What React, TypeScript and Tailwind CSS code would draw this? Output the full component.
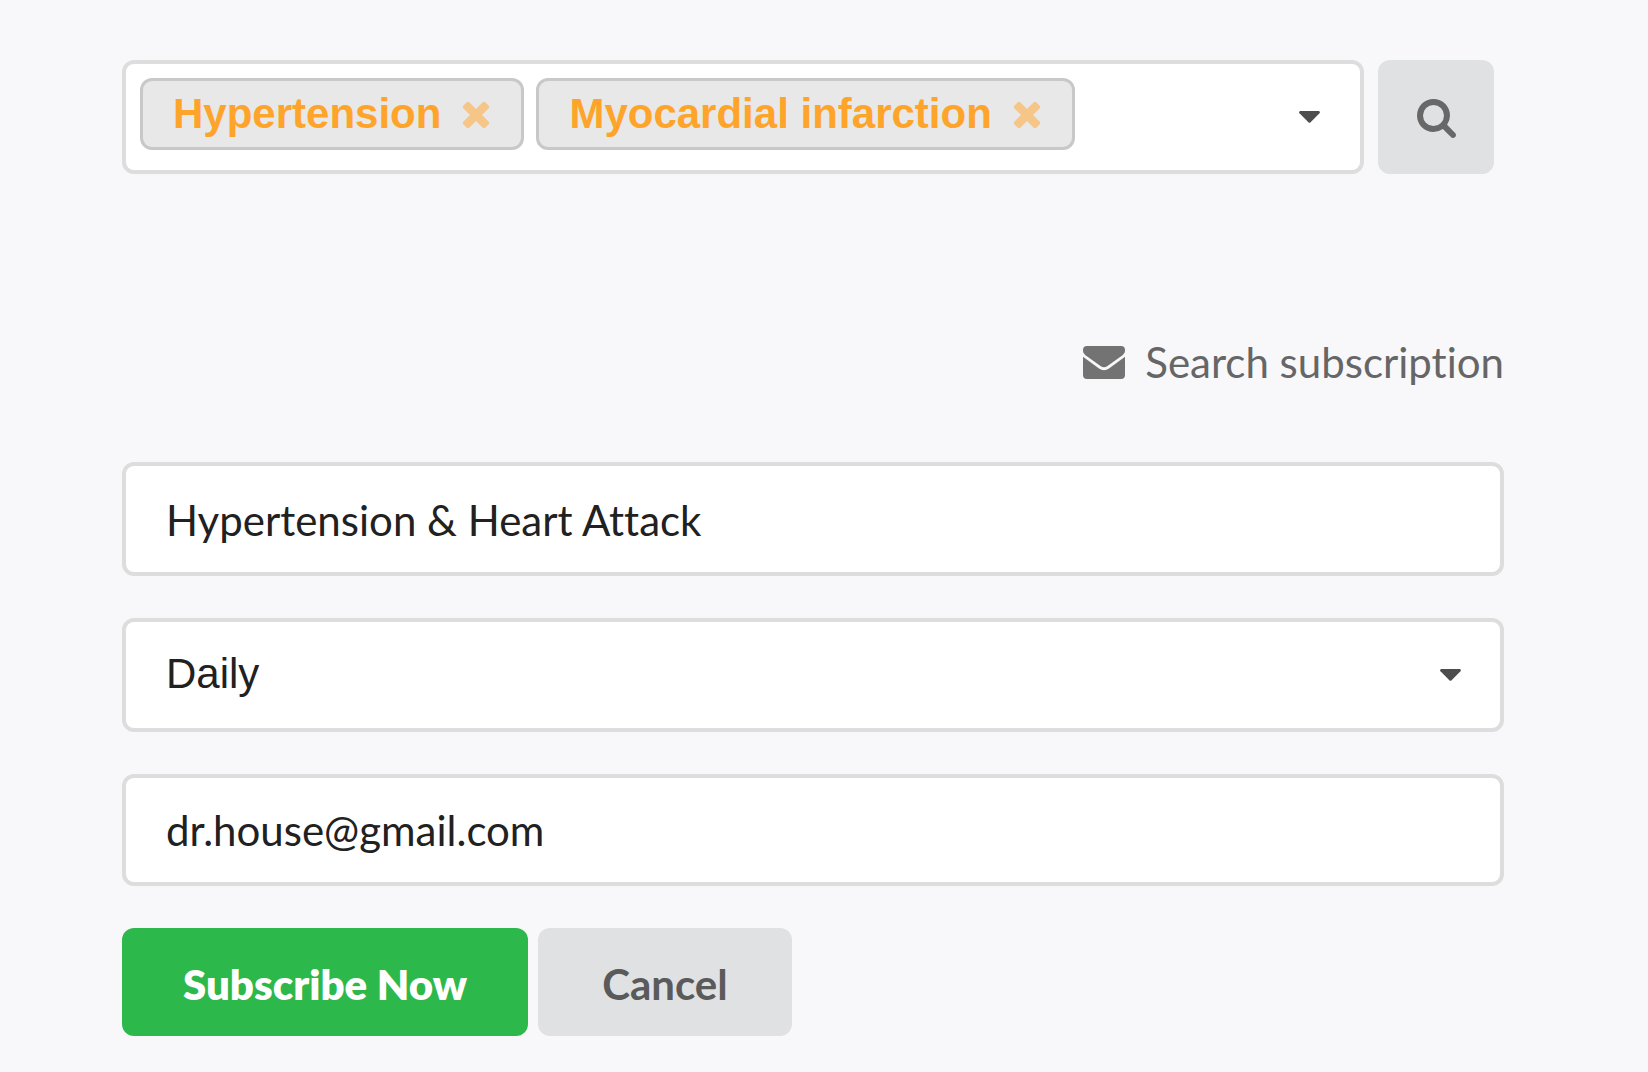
import { useState } from "react";

const fieldBox =
  "w-full rounded-xl border-4 border-[#dddddd] bg-white px-10 text-[42px] text-[#212121] outline-none";

function SearchIcon() {
  return (
    <svg aria-hidden="true" viewBox="64 128 1664 1664" className="size-[39px] fill-current">
      <path d="M1216 832q0-185-131.5-316.5t-316.5-131.5-316.5 131.5-131.5 316.5 131.5 316.5 316.5 131.5 316.5-131.5 131.5-316.5zm512 832q0 52-38 90t-90 38q-54 0-90-38l-343-342q-179 124-399 124-143 0-273.5-55.5t-225-150-150-225-55.5-273.5 55.5-273.5 150-225 225-150 273.5-55.5 273.5 55.5 225 150 150 225 55.5 273.5q0 220-124 399l343 343q37 37 37 90z" />
    </svg>
  );
}

function MailIcon() {
  return (
    <svg aria-hidden="true" viewBox="0 0 42 33" className="h-[33px] w-[42px] fill-[#737373]">
      <path d="M4 0H38Q42 0 42 4V5Q42 7.5 39.5 9.3L24.5 20Q21 22.4 17.5 20L2.5 9.3Q0 7.5 0 5V4Q0 0 4 0Z" />
      <path d="M0 10.8 16 22.4Q21 26 26 22.4L42 10.8V29Q42 33 38 33H4Q0 33 0 29Z" />
    </svg>
  );
}

function CloseIcon() {
  return (
    <svg aria-hidden="true" viewBox="0 0 26 26" className="size-[26px]">
      <path
        d="M5 2.5 13 10.5 21 2.5 23.5 5 15.5 13 23.5 21 21 23.5 13 15.5 5 23.5 2.5 21 10.5 13 2.5 5Z"
        fill="#f5c688"
        stroke="#f5c688"
        strokeWidth="5"
        strokeLinejoin="round"
      />
    </svg>
  );
}

function CaretIcon() {
  return (
    <svg aria-hidden="true" viewBox="0 0 21 12" className="h-3 w-[21px] fill-[#4d4d4d]">
      <path d="M1.2 0H19.8Q21.6 .8 20.5 2.2L11.6 11.2Q10.5 12.2 9.4 11.2L.5 2.2Q-.6 .8 1.2 0Z" />
    </svg>
  );
}

export default function App() {
  const [terms, setTerms] = useState(["Hypertension", "Myocardial infarction"]);
  const [name, setName] = useState("Hypertension & Heart Attack");
  const [email, setEmail] = useState("dr.house@gmail.com");

  return (
    <main className="min-h-screen bg-[#f8f8fa] pt-15 pr-36 pb-9 pl-[122px] font-[Lato,sans-serif] [font-variant-ligatures:none]">
      <div className="flex gap-3.5 pr-2.5">
        <div className="flex min-h-[114px] flex-1 items-start justify-between rounded-xl border-4 border-[#dddddd] bg-white pt-3.5 pr-10 pb-5 pl-3.5">
          <ul className="flex flex-wrap gap-3">
            {terms.map((term) => (
              <li
                key={term}
                className="flex h-[72px] items-center gap-[22px] rounded-xl border-3 border-[#c8c8c8] bg-[#e8e8e8] pr-8 pl-[30px] font-['Liberation_Sans',Arial,sans-serif] text-[42px] leading-[66px] font-bold text-[#ffa42b]"
              >
                {term}
                <button
                  type="button"
                  aria-label={`Remove ${term}`}
                  className="mt-0.5"
                  onClick={() => setTerms(terms.filter((t) => t !== term))}
                >
                  <CloseIcon />
                </button>
              </li>
            ))}
          </ul>
          <button type="button" aria-label="Show terms" className="self-center pt-1.5">
            <CaretIcon />
          </button>
        </div>
        <button
          type="button"
          aria-label="Search"
          className="flex w-[116px] items-center justify-center rounded-xl bg-[#e0e1e2] pt-0.5 text-[#686868]"
        >
          <SearchIcon />
        </button>
      </div>

      <form onSubmit={(e) => e.preventDefault()} className="mt-[158px]">
        <h1 className="flex items-center justify-end gap-5 text-[42px] leading-15 text-[#666666]">
          <MailIcon />
          Search subscription
        </h1>
        <div className="mt-[70px] flex flex-col gap-[42px]">
          <input
            aria-label="Subscription name"
            value={name}
            onChange={(e) => setName(e.target.value)}
            className={`${fieldBox} h-[114px] pt-0.5`}
          />
          <div className="grid items-center">
            <select
              aria-label="Frequency"
              defaultValue="Daily"
              className={`${fieldBox} col-start-1 row-start-1 h-[114px] appearance-none pb-1 font-['Liberation_Sans',Arial,sans-serif]`}
            >
              <option>Daily</option>
              <option>Weekly</option>
              <option>Monthly</option>
            </select>
            <span className="pointer-events-none col-start-1 row-start-1 mr-[43px] justify-self-end">
              <CaretIcon />
            </span>
          </div>
          <input
            type="email"
            aria-label="Email"
            value={email}
            onChange={(e) => setEmail(e.target.value)}
            className={`${fieldBox} h-28`}
          />
        </div>
        <div className="mt-[42px] flex gap-2.5 text-[42px]">
          <button type="submit" className="h-27 rounded-xl bg-[#2db84b] px-[61px] pt-1 font-extrabold text-white">
            Subscribe Now
          </button>
          <button type="button" className="h-27 rounded-xl bg-[#e0e1e2] px-16 pt-1 font-bold text-[#5a5a5a]">
            Cancel
          </button>
        </div>
      </form>
    </main>
  );
}
